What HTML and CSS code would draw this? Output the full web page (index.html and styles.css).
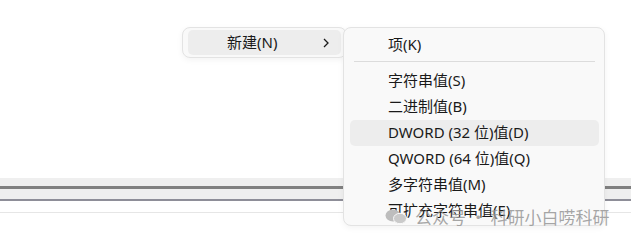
FILE: index.html
```html
<!DOCTYPE html>
<html lang="zh-CN">
<head>
    <meta charset="UTF-8">
    <title>新建</title>
    <link rel="stylesheet" href="styles.css">
</head>
<body>
    <div class="window">
        <div class="splitter">
            <div class="splitter-fill top"></div>
            <div class="splitter-rule"></div>
            <div class="splitter-fill bottom"></div>
            <div class="splitter-edge"></div>
        </div>
        <div class="header-line"></div>

        <div class="menu parent-menu">
            <div class="menu-item active">
                <span class="label">新建(N)</span>
                <svg class="chevron" width="6" height="10" viewBox="0 0 6 10">
                    <polyline points="1,1 5,5 1,9" fill="none" stroke="#1a1a1a" stroke-width="1.3"/>
                </svg>
            </div>
        </div>

        <div class="menu sub-menu">
            <div class="menu-item">项(K)</div>
            <div class="separator"></div>
            <div class="menu-item">字符串值(S)</div>
            <div class="menu-item">二进制值(B)</div>
            <div class="menu-item active">DWORD (32 位)值(D)</div>
            <div class="menu-item">QWORD (64 位)值(Q)</div>
            <div class="menu-item">多字符串值(M)</div>
            <div class="menu-item">可扩充字符串值(E)</div>
        </div>

        <div class="watermark">
            <svg class="wechat" width="22" height="15" viewBox="0 0 22 15">
                <ellipse cx="8" cy="6.5" rx="7.5" ry="6" fill="#bdbdbd"/>
                <ellipse cx="15" cy="9.5" rx="6.5" ry="5.2" fill="#cacaca" stroke="#fafafa" stroke-width="1"/>
            </svg>
            <span>公众号 · 科研小白唠科研</span>
        </div>
    </div>
</body>
</html>
```

FILE: styles.css
```css
body {
    margin: 0;
    padding: 0;
    background-color: #ffffff;
    font-family: "Noto Sans", "Noto Sans CJK SC", sans-serif;
}

.window {
    position: relative;
    width: 631px;
    height: 243px;
    overflow: hidden;
    padding-top: 178px;
    box-sizing: border-box;
}

.splitter-fill {
    background-color: #efefef;
}

.splitter-fill.top {
    height: 8px;
}

.splitter-rule {
    height: 3px;
    background-color: #808080;
}

.splitter-fill.bottom {
    height: 10px;
}

.splitter-edge {
    height: 2px;
    background-color: #8e8e98;
}

.header-line {
    margin-top: 11px;
    height: 1px;
    background-color: #e6e6e6;
}

.menu {
    position: absolute;
    background-color: #f9f9f9;
    border: 1px solid #e3e3e3;
    border-radius: 8px;
    box-shadow: 0 2px 6px rgba(0, 0, 0, 0.05);
    box-sizing: border-box;
    font-size: 15px;
    color: #1a1a1a;
}

.menu-item {
    height: 26px;
    line-height: 25px;
    padding-left: 38px;
    border-radius: 5px;
    white-space: nowrap;
}

.menu-item.active {
    background-color: #ededed;
}

.parent-menu {
    left: 182px;
    top: 27px;
    width: 165px;
    padding: 2px 5px;
}

.parent-menu .menu-item {
    display: flex;
    align-items: center;
    justify-content: space-between;
    padding-left: 39px;
    padding-right: 12px;
    height: 25px;
}

.sub-menu {
    left: 343px;
    top: 27px;
    width: 262px;
    height: 199px;
    padding: 4px 5px 1px 6px;
}

.separator {
    height: 1px;
    margin: 3px 4px 6px 4px;
    background-color: #dcdcdc;
}

.watermark {
    position: absolute;
    left: 385px;
    top: 204px;
    display: flex;
    align-items: center;
    gap: 8px;
    font-family: "Noto Sans CJK SC", sans-serif;
    font-size: 17px;
    color: rgba(150, 150, 150, 0.85);
}
```
